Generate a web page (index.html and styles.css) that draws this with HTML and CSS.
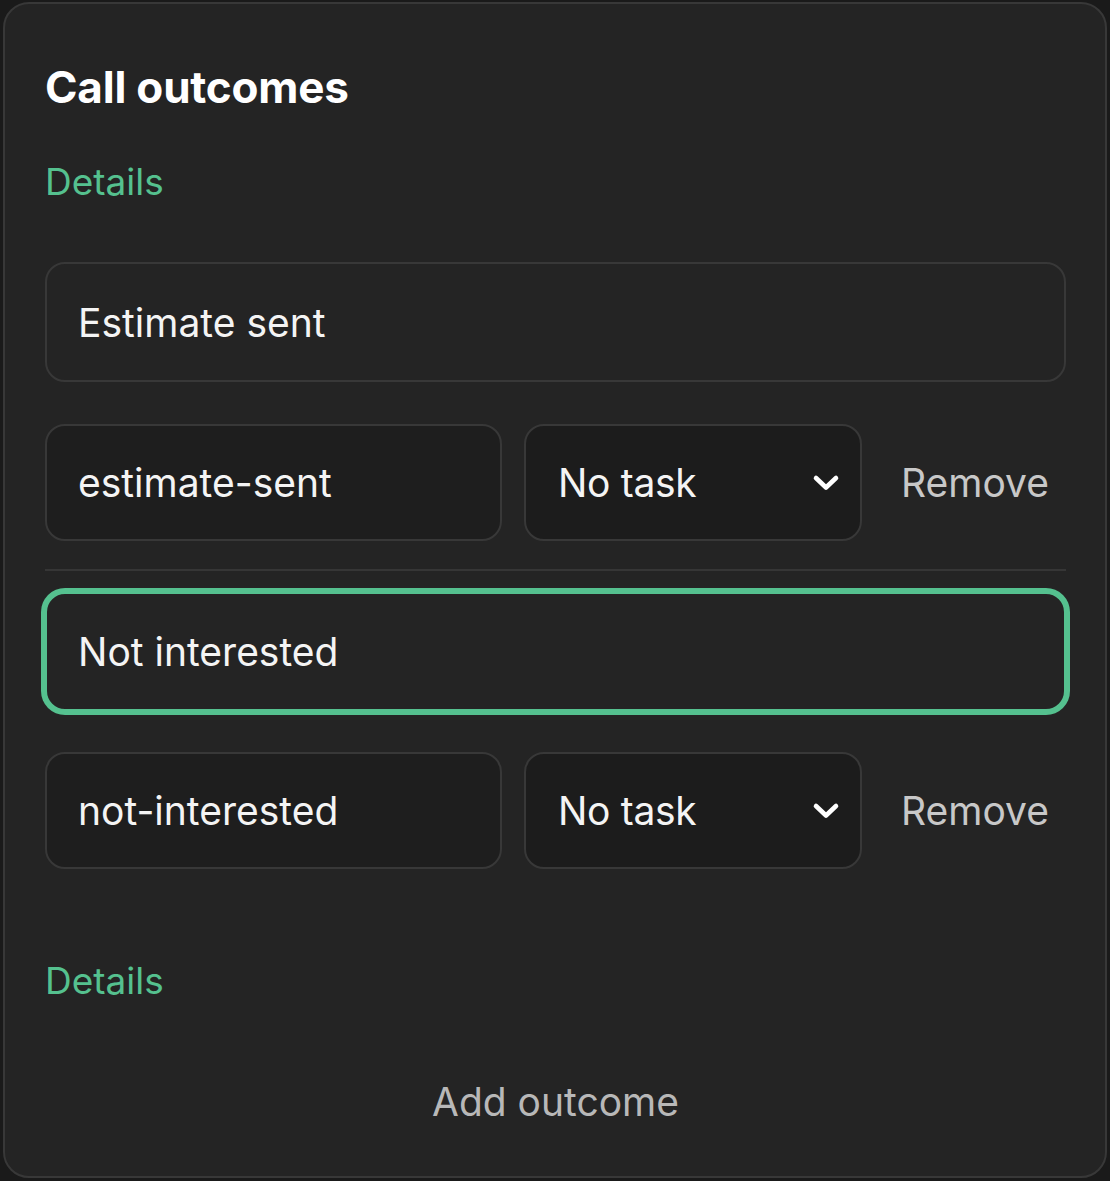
FILE: index.html
```html
<!DOCTYPE html>
<html lang="en">
<head>
<meta charset="utf-8">
<title>Call outcomes</title>
<link rel="stylesheet" href="styles.css">
</head>
<body>
<section class="card">
  <h1 class="title">Call outcomes</h1>
  <div class="details">Details</div>

  <div class="outcome">
    <div class="field name">Estimate sent</div>
    <div class="row">
      <div class="field slug">estimate-sent</div>
      <div class="field select">
        <span>No task</span>
        <svg class="chev" width="28" height="18" viewBox="0 0 28 18" aria-hidden="true"><polyline points="4,4 14,13.5 24,4" fill="none" stroke="#ffffff" stroke-width="4.6" stroke-linecap="round" stroke-linejoin="round"/></svg>
      </div>
      <button class="remove">Remove</button>
    </div>
  </div>

  <div class="divider"></div>

  <div class="outcome second">
    <div class="field name focused">Not interested</div>
    <div class="row">
      <div class="field slug">not-interested</div>
      <div class="field select">
        <span>No task</span>
        <svg class="chev" width="28" height="18" viewBox="0 0 28 18" aria-hidden="true"><polyline points="4,4 14,13.5 24,4" fill="none" stroke="#ffffff" stroke-width="4.6" stroke-linecap="round" stroke-linejoin="round"/></svg>
      </div>
      <button class="remove">Remove</button>
    </div>
  </div>

  <div class="details details-2">Details</div>
  <div class="add"><button class="add-btn">Add outcome</button></div>
</section>
</body>
</html>
```

FILE: styles.css
```css
html, body {
  margin: 0;
  padding: 0;
  background: #1a1a1a;
}
body {
  font-family: Inter, "Noto Sans", "Liberation Sans", sans-serif;
  color: #f2f2f2;
}
.card {
  box-sizing: border-box;
  margin: 2px 3px;
  width: 1104px;
  height: 1176px;
  background: #242424;
  border: 2px solid #383838;
  border-radius: 26px;
  padding: 58px 39px 0 40px;
  display: flex;
  flex-direction: column;
}
.title {
  margin: 0;
  font-size: 44px;
  line-height: 50px;
  font-weight: 700;
  color: #ffffff;
  letter-spacing: -0.2px;
}
.details {
  margin-top: 48px;
  font-size: 37px;
  line-height: 44px;
  color: #55c18f;
}
.outcome {
  margin-top: 58px;
  display: flex;
  flex-direction: column;
}
.outcome.second {
  margin-top: 21px;
}
.field {
  box-sizing: border-box;
  border: 2px solid #383838;
  border-radius: 20px;
  font-size: 39px;
  color: #f4f4f4;
  display: flex;
  align-items: center;
  padding-left: 31px;
}
.name {
  height: 120px;
  background: #242424;
}
.name.focused {
  height: 119px;
  border-color: #55c18f;
  box-shadow: 0 0 0 4px #55c18f;
}
.row {
  margin-top: 42px;
  display: flex;
  gap: 22px;
  height: 117px;
}
.second .row {
  margin-top: 41px;
}
.slug {
  flex: 1;
  background: #1e1e1e;
}
.select {
  width: 338px;
  flex: none;
  background: #1c1c1c;
  padding-left: 32px;
  padding-right: 20px;
  justify-content: space-between;
  letter-spacing: -0.3px;
}
.chev {
  display: block;
}
.remove {
  width: 182px;
  flex: none;
  background: none;
  border: none;
  padding: 0;
  font-family: inherit;
  font-size: 39px;
  color: #c8c8c8;
}
.divider {
  margin-top: 28px;
  height: 2px;
  background: #363636;
}
.details-2 {
  margin-top: 90px;
}
.add {
  margin-top: 76px;
  display: flex;
  justify-content: center;
}
.add-btn {
  background: none;
  border: none;
  padding: 0;
  font-family: inherit;
  font-size: 39px;
  line-height: 46px;
  color: #b8b8b8;
}
```
